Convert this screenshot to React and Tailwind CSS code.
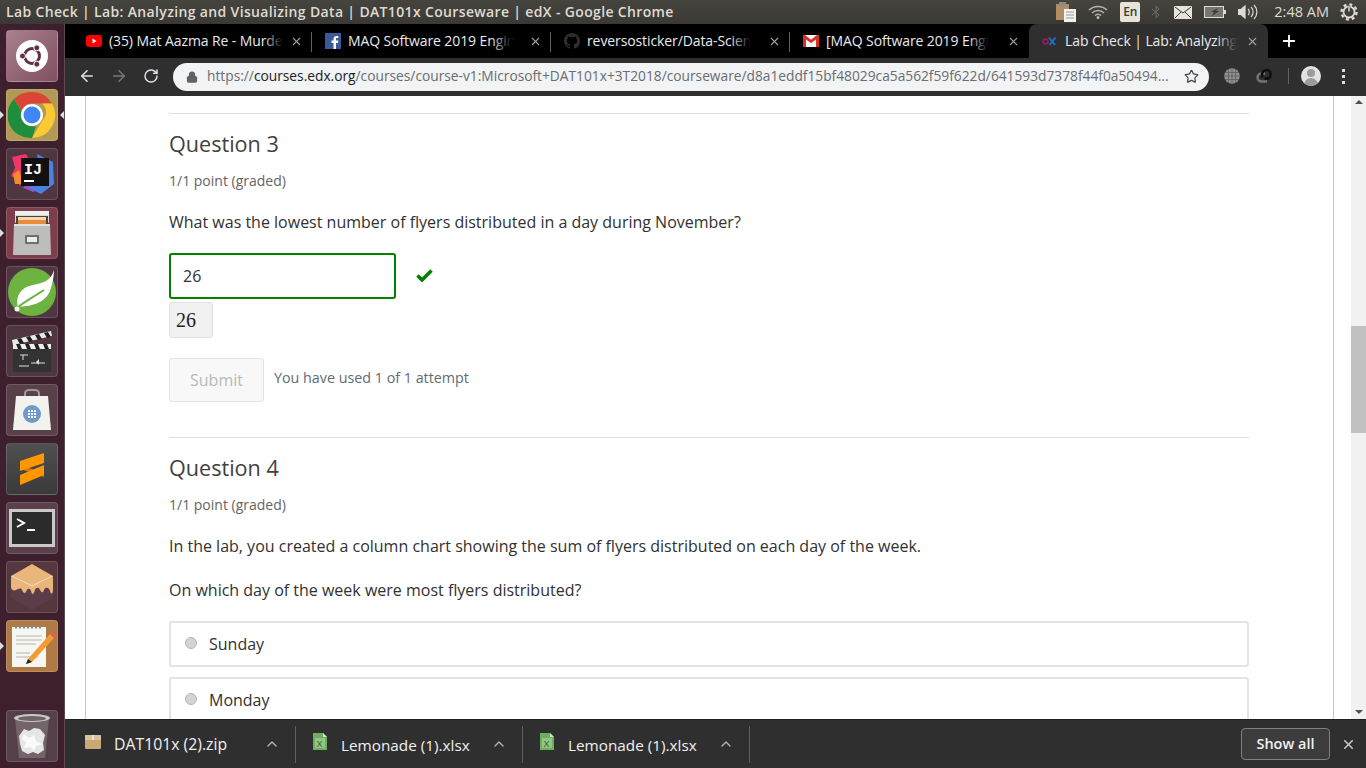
import React from 'react';
import { ArrowLeft, ArrowRight, RotateCw, Lock, Star, Plus, X, ChevronUp } from 'lucide-react';

const Tile = ({ className = '', children }) => (
  <div className={`w-[52px] h-[52px] rounded-[4px] border border-white/15 flex items-center justify-center shrink-0 overflow-hidden ${className}`}>
    {children}
  </div>
);

const Pip = ({ className = '' }) => (
  <div className={`absolute top-1/2 -mt-[4px] w-0 h-0 border-y-[4px] border-y-transparent ${className}`}></div>
);

const UbuntuIcon = () => (
  <svg width="34" height="34" viewBox="0 0 34 34">
    <circle cx="17" cy="17" r="16" fill="#fff" />
    <circle cx="17" cy="17" r="7.5" fill="none" stroke="#5f3347" strokeWidth="3" />
    <circle cx="7.500" cy="17" r="3" fill="#5f3347" stroke="#fff" />
    <circle cx="21.800" cy="8.800" r="3" fill="#5f3347" stroke="#fff" />
    <circle cx="21.800" cy="25.200" r="3" fill="#5f3347" stroke="#fff" />
  </svg>
);

const ChromeIcon = () => (
  <svg width="48" height="48" viewBox="0 0 48 48">
    <path d="M24 1a23 23 0 0 1 20 11.500H24a11.500 11.500 0 0 0-10.500 7L6 8A23 23 0 0 1 24 1z" fill="#db4437" />
    <path d="M44 12.500A23 23 0 0 1 24 47l10-17a11.500 11.500 0 0 0 0-17.500z" fill="#fcc934" />
    <path d="M6 8l7.500 12a11.500 11.500 0 0 0 10.500 15.500 11 11 0 0 0 4-.5L24 47A23 23 0 0 1 6 8z" fill="#1e8e3e" />
    <circle cx="24" cy="24" r="11" fill="#fff" />
    <circle cx="24" cy="24" r="8.500" fill="#4285f4" />
  </svg>
);

const IdeaIcon = () => (
  <svg width="46" height="44" viewBox="0 0 46 44">
    <path d="M3 5l14-3 6 10-12 22-5-8-4-2 4-8z" fill="#f0356b" />
    <path d="M4 22l6-4 4 14-8 0z" fill="#f58a2b" />
    <path d="M14 36l10 4 10-4-10-16z" fill="#9a4cc0" />
    <path d="M28 2l16 8 1 22-13 10-12-6 10-20z" fill="#4b7fe0" />
    <rect x="12" y="6" width="28" height="28" fill="#111" />
    <text x="15" y="21.500" fill="#fff" fontSize="15" fontWeight="700" fontFamily="Liberation Mono, monospace">IJ</text>
    <rect x="15" y="28" width="10" height="2" fill="#fff" />
  </svg>
);

const FilesIcon = () => (
  <svg width="44" height="46" viewBox="0 0 44 46">
    <rect x="5" y="1" width="34" height="12" rx="1" fill="#d8d8d4" />
    <rect x="5" y="1" width="34" height="4" fill="#eeeeea" />
    <rect x="6" y="6" width="32" height="10" fill="#444" />
    <rect x="8" y="7" width="28" height="3" fill="#f8d7a8" />
    <rect x="8" y="10" width="28" height="4" fill="#ec8c3a" />
    <path d="M4 14h36l1 31H3z" fill="#bdbdb9" />
    <path d="M4 14h36v2H4z" fill="#e0e0dc" />
    <rect x="15" y="25" width="14" height="9" rx="1" fill="#6d6d6b" />
    <rect x="17" y="27" width="10" height="5" fill="#ececec" />
  </svg>
);

const SpringIcon = () => (
  <svg width="50" height="50" viewBox="0 0 50 50">
    <circle cx="25" cy="25" r="24" fill="#6db33f" />
    <path d="M47 3C44 14 36 16 26 18 15 20 8 28 11 40c10-1 26-2 32-16 2-6 4-14 4-21z" fill="#fff" />
    <path d="M11 40C20 33 28 29 37 23" stroke="#6db33f" strokeWidth="2" fill="none" />
    <circle cx="10" cy="42" r="2.500" fill="#fff" />
  </svg>
);

const ClapperIcon = () => (
  <svg width="42" height="44" viewBox="0 0 42 44">
    <path d="M1 11L40 2l1 5-39 9z" fill="#e8e8e8" />
    <path d="M6 10l4-1 3 5-4 1zM15 8l4-1 3 5-4 1zM24 6l4-1 3 5-4 1zM33 4l4-1 3 5-4 1z" fill="#222" />
    <rect x="2" y="19" width="38" height="24" fill="#333" />
    <rect x="2" y="15" width="38" height="5" fill="#eee" />
    <path d="M5 15h4l2 5H7zM14 15h4l2 5h-4zM23 15h4l2 5h-4zM32 15h4l2 5h-4z" fill="#222" />
    <path d="M9 26h8M12 26v5M20 34h14M8 37h10" stroke="#ddd" strokeWidth="1" />
    <path d="M25 33l3-3v6z" fill="#ddd" />
  </svg>
);

const BagIcon = () => (
  <svg width="38" height="44" viewBox="0 0 38 44">
    <path d="M12 9V5a4 4 0 0 1 4-3h6a4 4 0 0 1 4 3v4" fill="none" stroke="#999" strokeWidth="2" />
    <path d="M3 8h32l3 34H0z" fill="#f2f2ee" />
    <circle cx="19" cy="26" r="9" fill="#6f99cf" />
    <path d="M15 22h2v2h-2zM18 22h2v2h-2zM21 22h2v2h-2zM15 25h2v2h-2zM18 25h2v2h-2zM21 25h2v2h-2zM15 28h2v2h-2zM18 28h2v2h-2zM21 28h2v2h-2z" fill="#fff" />
  </svg>
);

const SublimeIcon = () => (
  <svg width="24" height="32" viewBox="0 0 24 32">
    <path d="M0 12l24 8v4L0 16z" fill="#d9770f" />
    <path d="M24 0v10L0 18V8z" fill="#ff9800" />
    <path d="M24 12v10L0 32V22z" fill="#ff9800" />
  </svg>
);

const TerminalIcon = () => (
  <svg width="46" height="38" viewBox="0 0 46 38">
    <rect x="0" y="0" width="46" height="38" fill="#c9c9c9" />
    <rect x="3" y="3" width="40" height="32" fill="#2b2b2b" />
    <path d="M8 10l7 4-7 4" fill="none" stroke="#fff" strokeWidth="2" />
    <rect x="18" y="20" width="8" height="2" fill="#fff" />
  </svg>
);

const SweetIcon = () => (
  <svg width="44" height="48" viewBox="0 0 44 48">
    <path d="M22 1l21 12v22L22 47 1 35V13z" fill="#5a3d49" />
    <path d="M22 1l21 12v14c0 4-2 5-3 1-1-4-5-4-6-1-1 4-3 2-4 0-1-3-4-3-5 0-1 4-3 6-4 1-1-3-4-3-5 1-1 2-3 1-4-2-1-3-4-1-6 0-2 1-5 0-5-3V13z" fill="#e9b57a" />
    <path d="M2 13l20 10 20-10" fill="none" stroke="#f6e1c1" strokeWidth="1" />
  </svg>
);

const NoteIcon = () => (
  <svg width="46" height="46" viewBox="0 0 46 46">
    <rect x="3" y="4" width="34" height="40" fill="#f6f6f2" />
    <path d="M6 4h28" stroke="#888" strokeWidth="3" strokeDasharray="2 2" />
    <path d="M7 13h26M7 17h26M7 21h20M7 30h14M7 34h22" stroke="#b5b5b0" strokeWidth="1" />
    <path d="M19 36l22-25 4 4-22 24-6 2z" fill="#f39c32" />
    <path d="M41 11l2-3 3 4-1 3z" fill="#e85d5d" />
    <path d="M17 41l2-5 4 3z" fill="#222" />
  </svg>
);

const TrashIcon = () => (
  <svg width="38" height="48" viewBox="0 0 38 48">
    <path d="M2 6l4 40h26l4-40z" fill="#8a8284" fillOpacity="0.55" />
    <ellipse cx="19" cy="6" rx="18" ry="4" fill="#c8c8c8" />
    <ellipse cx="19" cy="6.500" rx="14" ry="2.500" fill="#6f6466" />
    <path d="M6 24l5-7 5 2 5-3 6 1 5 6-2 8 1 7-6 4-5-2-5 2-6-3-2-7z" fill="#e6e6e6" />
    <path d="M11 22l5 4 5-3 2 6 6 3-6 2-2 5-4-4-6 1 2-6-4-3z" fill="#fafafa" />
  </svg>
);

const YoutubeFav = () => (
  <svg width="16" height="16" viewBox="0 0 16 16">
    <rect x="0" y="2" width="16" height="12" rx="3" fill="#f00" />
    <path d="M6.500 5.500v5l4-2.500z" fill="#fff" />
  </svg>
);

const FacebookFav = () => (
  <svg width="16" height="16" viewBox="0 0 16 16">
    <rect width="16" height="16" fill="#3b5998" />
    <path d="M11 16v-6h2l.3-2.400H11V6.200c0-.7.200-1.100 1.100-1.100h1.200V3c-.6-.1-1.200-.1-1.800-.1-1.800 0-3 1.100-3 3.100v1.600h-2V10h2v6z" fill="#fff" />
  </svg>
);

const GithubFav = () => (
  <svg width="16" height="16" viewBox="0 0 16 16">
    <path fill="#2f2f2f" d="M8 0C3.580 0 0 3.580 0 8c0 3.540 2.290 6.530 5.470 7.590.4.070.55-.17.55-.38v-1.340c-2.230.48-2.700-1.070-2.700-1.070-.36-.92-.89-1.170-.89-1.170-.73-.5.050-.49.050-.49.800.060 1.230.83 1.230.83.710 1.220 1.870.87 2.330.66.070-.52.280-.87.510-1.070-1.780-.2-3.640-.89-3.640-3.950 0-.87.310-1.590.82-2.150-.08-.2-.36-1.020.08-2.120 0 0 .67-.21 2.200.82A7.600 7.600 0 0 1 8 3.870c.68 0 1.360.09 2 .27 1.530-1.040 2.200-.82 2.200-.82.44 1.100.16 1.920.08 2.120.51.560.82 1.270.82 2.150 0 3.070-1.870 3.750-3.650 3.950.29.250.54.730.54 1.480v2.190c0 .21.150.46.550.38A8 8 0 0 0 16 8c0-4.420-3.580-8-8-8z" />
  </svg>
);

const GmailFav = () => (
  <svg width="16" height="16" viewBox="0 0 16 16">
    <rect x="0" y="2" width="16" height="12" fill="#f5f5f5" />
    <path d="M0 2v12h3V6.500L8 10l5-3.500V14h3V2h-2L8 6.800 2 2z" fill="#d93025" />
  </svg>
);

const EdxFav = () => (
  <svg width="16" height="16" viewBox="0 0 16 16">
    <circle cx="3.500" cy="8.500" r="2.500" fill="none" stroke="#b0125b" strokeWidth="1.500" />
    <path d="M7 4.500l6 7.500M13.500 4.500l-6 7.500" stroke="#1d72c9" strokeWidth="2" />
  </svg>
);

const Tab = ({ fav, title, active, last }) => (
  <div className={`relative w-[239px] h-[34px] shrink-0 flex items-center pl-[13px] ${active ? 'bg-[#2f2f2f] rounded-t-[8px]' : ''}`}>
    <div className="w-4 h-4 shrink-0">{fav}</div>
    <div className="w-[176px] ml-[7px] whitespace-nowrap text-[14px] tracking-[-0.1px] leading-[34px] text-[#e8eaed]">
      <span className="relative inline-block">
        {title}
        <span className={`absolute right-0 top-0 bottom-0 w-5 bg-linear-to-r from-transparent ${active ? 'to-[#2f2f2f]' : 'to-black'}`}></span>
      </span>
    </div>
    <X size={13} strokeWidth={2} className="ml-[5px] text-[#9aa0a6]" />
    {!last && !active && <div className="absolute right-0 top-[8px] h-[20px] w-px bg-[#5f6368]"></div>}
  </div>
);

const ZipIcon = () => (
  <svg width="16" height="16" viewBox="0 0 16 16">
    <rect x="0" y="1" width="16" height="14" rx="1" fill="#c8a873" />
    <rect x="0" y="1" width="16" height="5" rx="1" fill="#dac49b" />
    <rect x="7" y="1" width="2" height="5" fill="#efe4cd" />
  </svg>
);

const XlsxIcon = () => (
  <svg width="14" height="17" viewBox="0 0 14 17">
    <path d="M0 0h10l4 4v13H0z" fill="#6fae5f" />
    <path d="M10 0l4 4h-4z" fill="#cfe5c8" />
    <rect x="2" y="5" width="10" height="10" fill="#92c585" />
    <text x="3.500" y="13.500" fontSize="9" fill="#2e6a28" fontFamily="Liberation Sans, sans-serif">X</text>
  </svg>
);

const DownloadItem = ({ icon, name, width, iconBox, textClass }) => (
  <div className={`flex items-center h-[37px] border-r border-[#5f6062] shrink-0 ${width}`}>
    <div className={`flex items-center shrink-0 ${iconBox}`}>{icon}</div>
    <span className={`text-[#f1f1f1] whitespace-nowrap flex-1 mt-[2px] ${textClass}`}>{name}</span>
    <ChevronUp size={16} strokeWidth={2} className="text-[#b4b4b4] mr-[15px]" />
  </div>
);

const Question = ({ title, children }) => (
  <div>
    <h3 className="text-[21.6px] leading-[30px] text-[#414141]">{title}</h3>
    <div className="mt-[13px] text-[14px] leading-[18px] text-[#646464]">1/1 point (graded)</div>
    {children}
  </div>
);

const RadioRow = ({ label }) => (
  <div className="h-[46px] shrink-0 border-2 border-[#e4e4e4] rounded-[3px] flex items-center pl-[14px]">
    <div className="w-[12px] h-[12px] rounded-full bg-[#d4d4d4] border border-[#b4b4b4] -mt-[3px]"></div>
    <span className="ml-[12px] text-[16px] text-[#313131]">{label}</span>
  </div>
);

export default function App() {
  return (
    <div className="w-[1366px] h-[768px] overflow-hidden flex flex-col bg-white font-['Open_Sans',sans-serif]">
      {/* ubuntu top bar */}
      <div className="h-[24px] shrink-0 bg-linear-to-b from-[#45443f] to-[#3a3935] flex items-center pl-[6px] pr-[8px]">
        <span className="-mt-[2px] text-[14px] font-semibold tracking-[0.35px] text-[#dfdbd2] whitespace-nowrap">
          Lab Check | Lab: Analyzing and Visualizing Data | DAT101x Courseware | edX - Google Chrome
        </span>
        <div className="ml-auto flex items-center text-[#dfdbd2]">
          <svg width="20" height="20" viewBox="0 0 20 20">
            <rect x="0" y="2" width="13" height="16" fill="#b08d62" />
            <rect x="3" y="0" width="7" height="4" fill="#8a8a8a" />
            <rect x="8" y="7" width="12" height="13" fill="#f2f2f2" />
            <path d="M10 10h8M10 13h8M10 16h8" stroke="#999" />
          </svg>
          <svg className="ml-[12px]" width="20" height="14" viewBox="0 0 20 14" fill="none" stroke="#b9b5ac" strokeWidth="1.500">
            <path d="M1 5a13 13 0 0 1 18 0M4 8a8.500 8.500 0 0 1 12 0M7 10.500a4 4 0 0 1 6 0" />
            <circle cx="10" cy="12.500" r="0.800" fill="#b9b5ac" />
          </svg>
          <div className="ml-[12px] w-[20px] h-[20px] rounded-[2px] bg-[#e8e4da] text-[#3c3b37] text-[12px] font-semibold flex items-center justify-center">En</div>
          <svg className="ml-[12px]" width="8" height="14" viewBox="0 0 8 14" fill="none" stroke="#6f6e69" strokeWidth="1">
            <path d="M0 4l7 6-3 3V1l3 3-7 6" />
          </svg>
          <svg className="ml-[14px]" width="18" height="13" viewBox="0 0 18 13">
            <rect width="18" height="13" rx="1" fill="#e8e4da" />
            <path d="M1 1l8 6 8-6M1 12l6-6M17 12l-6-6" fill="none" stroke="#3c3b37" />
          </svg>
          <svg className="ml-[12px]" width="22" height="12" viewBox="0 0 22 12">
            <rect x="0.500" y="0.500" width="19" height="11" fill="#77766f" stroke="#dfdbd2" />
            <rect x="20" y="4" width="2" height="4" fill="#dfdbd2" />
            <path d="M14 2L7 6h3l-2 4 7-5h-3z" fill="#3c3b37" />
          </svg>
          <svg className="ml-[12px]" width="20" height="16" viewBox="0 0 20 16" fill="none" stroke="#dfdbd2" strokeWidth="1.200">
            <path d="M0 5.500h3L7 2v12l-4-3.500H0z" fill="#dfdbd2" />
            <path d="M10 5a4 4 0 0 1 0 6M13 3a7 7 0 0 1 0 10M16 1a10 10 0 0 1 0 14" />
          </svg>
          <span className="ml-[16px] text-[14.5px] whitespace-nowrap">2:48 AM</span>
          <svg className="ml-[11px]" width="18" height="18" viewBox="0 0 18 18" fill="none" stroke="#dfdbd2">
            <circle cx="9" cy="9" r="7.500" strokeWidth="2.500" strokeDasharray="3 2.900" />
            <circle cx="9" cy="9" r="5.500" strokeWidth="1.800" />
            <path d="M9 2v7" strokeWidth="2.500" stroke="#3c3b37" />
            <path d="M9 2.500v6" strokeWidth="1.500" />
          </svg>
        </div>
      </div>

      <div className="flex-1 min-h-0 flex">
        {/* launcher */}
        <div className="w-[65px] shrink-0 bg-[#3d1f2d] border-r border-[#5e4a54] flex flex-col gap-[7px] pt-[6px] pb-[6px] items-center pr-[1px]">
          <Tile className="bg-linear-to-br from-[#a97f8f] to-[#80505f]"><UbuntuIcon /></Tile>
          <div className="relative">
            <Pip className="-left-[6px] border-l-[4px] border-l-[#dddddd]" />
            <Tile className="bg-[#b09a55]"><ChromeIcon /></Tile>
            <Pip className="-right-[6px] border-r-[4px] border-r-[#dddddd]" />
          </div>
          <Tile className="bg-[#4f3641]"><IdeaIcon /></Tile>
          <div className="relative">
            <Pip className="-left-[6px] border-l-[4px] border-l-[#dddddd]" />
            <Tile className="bg-[#7d3d4c]"><FilesIcon /></Tile>
          </div>
          <Tile className="bg-[#4f3641]"><SpringIcon /></Tile>
          <Tile className="bg-[#4f3641]"><ClapperIcon /></Tile>
          <Tile className="bg-[#5a4049]"><BagIcon /></Tile>
          <Tile className="bg-linear-to-b from-[#505050] to-[#3a3a3a]"><SublimeIcon /></Tile>
          <Tile className="bg-[#5a4049]"><TerminalIcon /></Tile>
          <Tile className="bg-[#54373f]"><SweetIcon /></Tile>
          <div className="relative">
            <Pip className="-left-[6px] border-l-[4px] border-l-[#dddddd]" />
            <Tile className="bg-[#b07a45]"><NoteIcon /></Tile>
          </div>
          <Tile className="mt-auto bg-[#55404a]"><TrashIcon /></Tile>
        </div>

        <div className="flex-1 min-w-0 flex flex-col">
          {/* tabs */}
          <div className="h-[34px] shrink-0 bg-black flex items-center pl-[8px]">
            <Tab fav={<YoutubeFav />} title="(35) Mat Aazma Re - Murde" />
            <Tab fav={<FacebookFav />} title="MAQ Software 2019 Engir" />
            <Tab fav={<GithubFav />} title="reversosticker/Data-Scien" />
            <Tab fav={<GmailFav />} title="[MAQ Software 2019 Engi" last />
            <Tab fav={<EdxFav />} title="Lab Check | Lab: Analyzing" active />
            <Plus size={18} strokeWidth={2.5} className="ml-[12px] text-white" />
          </div>

          {/* toolbar */}
          <div className="h-[38px] shrink-0 bg-[#2f2f2f] flex items-center pl-[13px] pb-[2px]">
            <ArrowLeft size={18} strokeWidth={2} className="text-[#dee1e6]" />
            <ArrowRight size={18} strokeWidth={2} className="ml-[14px] text-[#75787c]" />
            <RotateCw size={16} strokeWidth={2.2} className="ml-[15px] text-[#dee1e6]" />
            <div className="ml-[14px] mt-[2px] w-[1036px] h-[28px] rounded-full bg-[#f1f3f4] flex items-center pl-[13px] pr-[10px] shrink-0">
              <Lock size={12} strokeWidth={2.5} className="-mt-[1px] text-[#5f6368] fill-[#5f6368] shrink-0" />
              <div className="ml-[9px] -mt-[1px] text-[13.75px] text-[#6a6d71] whitespace-nowrap flex-1">
                https://<span className="text-[#202124]">courses.edx.org</span>/courses/course-v1:Microsoft+DAT101x+3T2018/courseware/d8a1eddf15bf48029ca5a562f59f622d/641593d7378f44f0a50494...
              </div>
              <Star size={15} strokeWidth={2} className="-mt-[1px] text-[#45484c] shrink-0" />
            </div>
            <svg className="ml-[15px]" width="16" height="16" viewBox="0 0 16 16" fill="#8f8f8f" stroke="#5a5a5a" strokeWidth="0.700">
              <circle cx="8" cy="8" r="7.800" stroke="none" />
              <path d="M0 8h16M1 4.500h14M1 11.500h14M8 0v16M4.500 1v14M11.500 1v14" fill="none" />
            </svg>
            <svg className="ml-[16px]" width="16" height="16" viewBox="0 0 16 16" fill="none" strokeWidth="2.400">
              <path d="M11 13.500H5.500A4 4 0 0 1 1.500 9.500 4 4 0 0 1 5.500 5.500H9" stroke="#757575" />
              <path d="M6 9.500V7a5 5 0 0 1 5-5 3.500 3.500 0 0 1 3.500 3.500v2a3 3 0 0 1-3 3H8.500" stroke="#0d0d0d" />
            </svg>
            <div className="ml-[16px] w-px h-[16px] bg-[#5f6368]"></div>
            <div className="ml-[12px] w-[20px] h-[20px] rounded-full bg-[#e3e3e3] flex flex-col items-center overflow-hidden shrink-0">
              <div className="mt-[3px] w-[8px] h-[8px] rounded-full bg-[#9c9c9c]"></div>
              <div className="mt-[1px] w-[14px] h-[8px] rounded-t-full bg-[#9c9c9c]"></div>
            </div>
            <div className="ml-[21px] flex flex-col gap-[3px]">
              <div className="w-[3px] h-[3px] bg-[#dcdcdc]"></div>
              <div className="w-[3px] h-[3px] bg-[#dcdcdc]"></div>
              <div className="w-[3px] h-[3px] bg-[#dcdcdc]"></div>
            </div>
          </div>

          {/* page */}
          <div className="flex-1 min-h-0 flex bg-white">
            <div className="w-[20px] shrink-0"></div>
            <div className="w-[1249px] shrink-0 border-x border-[#c8c8c8] pl-[83px] pr-[84px] pt-[17px] overflow-hidden flex flex-col text-[#313131]">
              <div className="border-t border-[#dddddd] pt-[15px] shrink-0">
                <Question title="Question 3">
                  <p className="mt-[20px] text-[16px] leading-[24px]">What was the lowest number of flyers distributed in a day during November?</p>
                  <div className="mt-[19px] flex items-center">
                    <div className="w-[227px] h-[46px] border-2 border-[#008100] rounded-[3px] flex items-center pl-[12px] text-[16px]">26</div>
                    <svg className="ml-[20px] -mt-[3px]" width="17" height="14" viewBox="0 0 17 14">
                      <path d="M1.500 7.500L6 12 15.500 2.500" fill="none" stroke="#008100" strokeWidth="3.600" />
                    </svg>
                  </div>
                  <div className="mt-[3px] w-[44px] h-[36px] rounded-[3px] bg-[#f1f1f1] border border-[#e2e2e2] pl-[6px] flex items-center font-['Liberation_Serif',serif] text-[20px] text-[#222222]">26</div>
                  <div className="mt-[20px] flex items-start">
                    <div className="w-[95px] h-[44px] rounded-[3px] bg-[#f8f8f8] border border-[#e2e2e2] flex items-center justify-center text-[16px] text-[#b9b9b9]">Submit</div>
                    <span className="ml-[10px] mt-[10px] text-[14.3px] leading-[20px] text-[#5e6b78]">You have used 1 of 1 attempt</span>
                  </div>
                </Question>
              </div>
              <div className="mt-[35px] border-t border-[#dddddd] pt-[15px] shrink-0">
                <Question title="Question 4">
                  <p className="mt-[20px] text-[16px] leading-[24px]">In the lab, you created a column chart showing the sum of flyers distributed on each day of the week.</p>
                  <p className="mt-[20px] text-[16px] leading-[24px]">On which day of the week were most flyers distributed?</p>
                  <div className="mt-[19px] flex flex-col gap-[10px]">
                    <RadioRow label="Sunday" />
                    <RadioRow label="Monday" />
                  </div>
                </Question>
              </div>
            </div>
            <div className="w-[17px] shrink-0"></div>
            {/* scrollbar */}
            <div className="w-[16px] shrink-0 bg-[#f1f1f1] flex flex-col items-center">
              <div className="mt-[4px] w-0 h-0 border-x-[4px] border-x-transparent border-b-[4px] border-b-[#505050]"></div>
              <div className="mt-[222px] w-full h-[107px] bg-[#c1c1c1]"></div>
              <div className="mt-auto mb-[5px] w-0 h-0 border-x-[4px] border-x-transparent border-t-[4px] border-t-[#505050]"></div>
            </div>
          </div>

          {/* downloads */}
          <div className="h-[49px] shrink-0 bg-[#2f2f2f] border-t border-[#1f1f1f] flex items-center">
            <DownloadItem icon={<ZipIcon />} name="DAT101x (2).zip" width="w-[231px]" iconBox="pl-[20px] w-[49px] -mt-[5px]" textClass="text-[15.8px]" />
            <DownloadItem icon={<XlsxIcon />} name="Lemonade (1).xlsx" width="w-[227px]" iconBox="pl-[17px] w-[45px] -mt-[5px]" textClass="text-[15.3px]" />
            <DownloadItem icon={<XlsxIcon />} name="Lemonade (1).xlsx" width="w-[227px]" iconBox="pl-[17px] w-[45px] -mt-[5px]" textClass="text-[15.3px]" />
            <div className="ml-auto w-[89px] h-[32px] rounded-[4px] border border-[#808080] bg-[#3c3c3c] flex items-center justify-center text-[14.5px] font-semibold text-[#f1f1f1]">Show all</div>
            <X size={15} strokeWidth={2.5} className="ml-[11px] mr-[10px] text-[#c4c4c4]" />
          </div>
        </div>
      </div>
    </div>
  );
}
